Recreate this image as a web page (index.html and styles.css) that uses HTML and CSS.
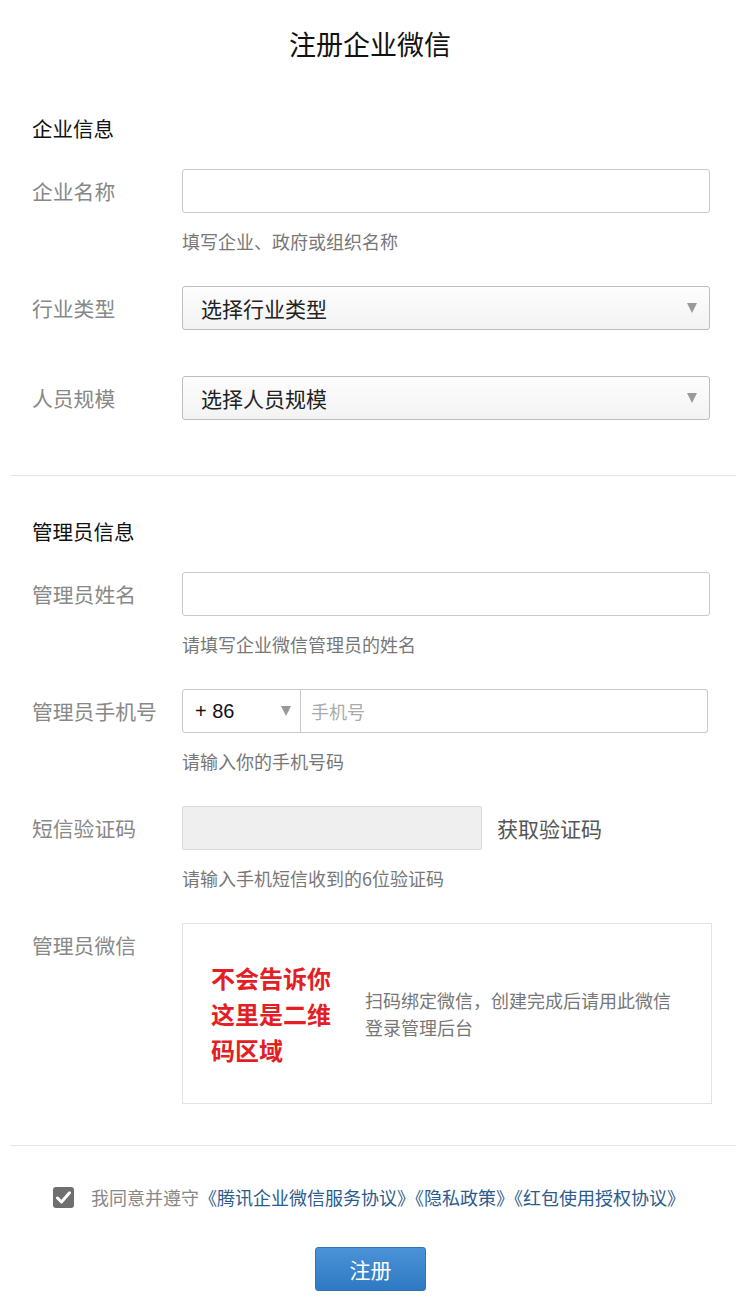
FILE: index.html
```html
<!DOCTYPE html>
<html lang="zh-CN">
<head>
<meta charset="utf-8">
<title>注册企业微信</title>
<link rel="stylesheet" href="styles.css">
</head>
<body>
<div class="page">
  <h1 class="title">注册企业微信</h1>

  <section class="section section-company">
    <h2 class="section-title">企业信息</h2>
    <div class="field">
      <div class="label">企业名称</div>
      <div class="control">
        <div class="input"></div>
        <div class="hint">填写企业、政府或组织名称</div>
      </div>
    </div>
    <div class="field field-select">
      <div class="label">行业类型</div>
      <div class="control">
        <div class="select"><span>选择行业类型</span><span class="arrow"></span></div>
      </div>
    </div>
    <div class="field">
      <div class="label">人员规模</div>
      <div class="control">
        <div class="select"><span>选择人员规模</span><span class="arrow"></span></div>
      </div>
    </div>
  </section>

  <div class="divider divider-mid"></div>

  <section class="section section-admin">
    <h2 class="section-title">管理员信息</h2>
    <div class="field">
      <div class="label">管理员姓名</div>
      <div class="control">
        <div class="input"></div>
        <div class="hint">请填写企业微信管理员的姓名</div>
      </div>
    </div>
    <div class="field">
      <div class="label">管理员手机号</div>
      <div class="control">
        <div class="phone">
          <div class="country"><span>+ 86</span><span class="arrow"></span></div>
          <div class="phone-input">手机号</div>
        </div>
        <div class="hint">请输入你的手机号码</div>
      </div>
    </div>
    <div class="field">
      <div class="label">短信验证码</div>
      <div class="control">
        <div class="sms">
          <div class="sms-input"></div>
          <span class="sms-link">获取验证码</span>
        </div>
        <div class="hint">请输入手机短信收到的6位验证码</div>
      </div>
    </div>
    <div class="field">
      <div class="label">管理员微信</div>
      <div class="control">
        <div class="qr-box">
          <div class="qr-area">不会告诉你这里是二维码区域</div>
          <div class="qr-text">扫码绑定微信，创建完成后请用此微信登录管理后台</div>
        </div>
      </div>
    </div>
  </section>

  <div class="divider divider-end"></div>

  <div class="agree">
    <span class="checkbox">
      <svg width="15" height="13" viewBox="0 0 15 13"><path d="M1.5 7 L5.5 11 L13.5 1.8" fill="none" stroke="#fff" stroke-width="3" stroke-linecap="round" stroke-linejoin="round"/></svg>
    </span>
    <span class="agree-text">我同意并遵守<a class="link">《腾讯企业微信服务协议》</a><a class="link">《隐私政策》</a><a class="link">《红包使用授权协议》</a></span>
  </div>

  <div class="actions">
    <button class="btn">注册</button>
  </div>
</div>
</body>
</html>
```

FILE: styles.css
```css
* { box-sizing: border-box; }

html, body {
  margin: 0;
  padding: 0;
  background: #fff;
}

body {
  font-family: "Noto Sans CJK SC", "Noto Sans", "Liberation Sans", sans-serif;
  color: #222;
}

.page {
  width: 736px;
  padding-bottom: 14px;
}

.title {
  margin: 0;
  height: 88px;
  line-height: 88px;
  text-align: center;
  font-size: 27px;
  font-weight: normal;
  color: #111;
  padding-left: 4px;
}

.section {
  padding: 0 26px 0 32px;
}

.section-title {
  margin: 25px 0 26px;
  height: 30px;
  line-height: 30px;
  font-size: 20.5px;
  font-weight: normal;
  color: #111;
}

.section-admin .section-title { margin-top: 40px; }

.divider {
  margin: 0 0 0 10px;
  height: 1px;
  background: #e6e6e6;
}

.divider-mid { margin-top: 55px; }
.divider-end { margin-top: 41px; }

.field {
  display: grid;
  grid-template-columns: 150px 1fr;
  margin-bottom: 33px;
}

.field:last-child { margin-bottom: 0; }

.field-select { margin-bottom: 46px; }

.label {
  height: 44px;
  line-height: 44px;
  font-size: 20.8px;
  color: #888;
  white-space: nowrap;
}

.input {
  height: 44px;
  border: 1px solid #c9c9c9;
  border-radius: 3px;
  background: #fff;
}

.hint {
  margin-top: 16px;
  height: 24px;
  line-height: 24px;
  font-size: 18px;
  color: #777;
  white-space: nowrap;
}

.select {
  height: 44px;
  border: 1px solid #bdbdbd;
  border-radius: 3px;
  background: linear-gradient(#fdfdfd, #f3f3f3);
  display: flex;
  align-items: center;
  justify-content: space-between;
  padding: 0 12px 0 18px;
  font-size: 21px;
  color: #222;
}

.arrow {
  width: 0;
  height: 0;
  border-left: 5px solid transparent;
  border-right: 5px solid transparent;
  border-top: 10px solid #999;
}

.phone {
  display: flex;
  height: 44px;
  width: 526px;
}

.country {
  width: 119px;
  height: 44px;
  border: 1px solid #c9c9c9;
  border-radius: 3px 0 0 3px;
  display: flex;
  align-items: center;
  justify-content: space-between;
  padding: 0 9px 0 12px;
  font-family: "Liberation Sans", Arial, sans-serif;
  font-size: 20px;
  color: #111;
}

.phone-input {
  flex: 1;
  height: 44px;
  border: 1px solid #c9c9c9;
  border-left: 0;
  border-radius: 0 3px 3px 0;
  line-height: 42px;
  padding-left: 10px;
  font-size: 18px;
  color: #aaa;
}

.sms {
  display: flex;
  align-items: center;
  gap: 15px;
}

.sms-input {
  width: 300px;
  height: 44px;
  border: 1px solid #d9d9d9;
  border-radius: 2px;
  background: #efeff0;
}

.sms-link {
  font-size: 21px;
  color: #555;
}

.qr-box {
  height: 181px;
  width: 530px;
  border: 1px solid #e3e3e3;
  display: flex;
  align-items: center;
  padding-left: 28px;
  gap: 32px;
}

.qr-area {
  width: 122px;
  font-size: 24px;
  line-height: 36px;
  font-weight: bold;
  color: #e31e25;
}

.qr-text {
  width: 310px;
  font-size: 18px;
  line-height: 27px;
  color: #777;
}

.agree {
  margin-top: 39px;
  display: flex;
  align-items: center;
  padding-left: 53px;
  height: 24px;
}

.checkbox {
  width: 21px;
  height: 21px;
  border-radius: 3px;
  background: #6f6f6f;
  display: flex;
  align-items: center;
  justify-content: center;
  margin-right: 17px;
}

.agree-text {
  font-size: 18px;
  line-height: 24px;
  color: #888;
  white-space: nowrap;
}

.link {
  color: #2b5b8e;
  text-decoration: none;
}

.actions {
  margin-top: 38px;
  display: flex;
  justify-content: center;
  padding-left: 5px;
}

.btn {
  width: 111px;
  height: 44px;
  border: 1px solid #2f74b5;
  border-radius: 3px;
  background: linear-gradient(#4b93d8, #2e79c2);
  color: #fff;
  font-family: "Noto Sans CJK SC", sans-serif;
  font-size: 21px;
  padding: 0;
}
```
